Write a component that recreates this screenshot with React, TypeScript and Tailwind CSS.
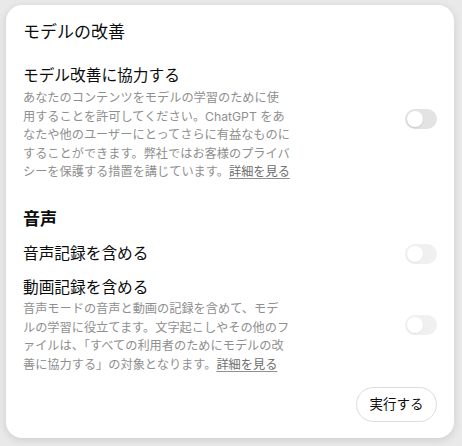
import React from 'react';

const FONT = { fontFamily: 'Inter, "Noto Sans CJK JP", sans-serif' };

interface ToggleProps {
  disabled?: boolean;
}

const Toggle = ({ disabled }: ToggleProps) => {
  return (
    <div
      className={`relative h-[20px] w-[32px] shrink-0 rounded-full bg-[#e3e3e3] ${
        disabled ? 'opacity-50' : ''
      }`}
    >
      <div className="absolute left-[2px] top-[2px] h-[16px] w-[16px] rounded-full bg-white shadow-[0_1px_2px_rgba(0,0,0,0.12)]" />
    </div>
  );
};

const Desc = ({ lines }: { lines: React.ReactNode[] }) => {
  return (
    <p className="text-[12.2px] leading-[18.6px] text-[#8f8f8f]">
      {lines.map((line, i) => (
        <span key={i} className="block whitespace-nowrap">
          {line}
        </span>
      ))}
    </p>
  );
};

const More = () => (
  <span className="text-[#6e6e6e] underline underline-offset-2 decoration-[#8f8f8f]">
    詳細を見る
  </span>
);

export default function App() {
  return (
    <div className="min-h-[446px] w-[462px] bg-[#e9e9e9] pt-[5px] pl-[6px]" style={FONT}>
      {/* Card */}
      <div className="flex h-[433px] w-[448px] flex-col rounded-[16px] bg-white px-[17px] pt-[15px] pb-[16px] text-[#0d0d0d] shadow-[0_2px_8px_rgba(0,0,0,0.12)]">
        <h2 className="text-[17px] leading-[24px]">モデルの改善</h2>

        {/* Model improvement row */}
        <div className="mt-[20px] flex items-center justify-between">
          <div>
            <h3 className="text-[15.7px] leading-[24px]">モデル改善に協力する</h3>
            <div className="mt-[1px]">
              <Desc
                lines={[
                  'あなたのコンテンツをモデルの学習のために使',
                  '用することを許可してください。ChatGPT をあ',
                  'なたや他のユーザーにとってさらに有益なものに',
                  'することができます。弊社ではお客様のプライバ',
                  <>
                    シーを保護する措置を講じています。<More />
                  </>,
                ]}
              />
            </div>
          </div>
          <div className="-mt-[8px]">
            <Toggle />
          </div>
        </div>

        {/* Voice section */}
        <h2 className="mt-[25px] text-[17px] font-semibold leading-[24px]">音声</h2>

        <div className="mt-[11px] flex items-center justify-between">
          <h3 className="text-[15.7px] leading-[24px]">音声記録を含める</h3>
          <Toggle disabled />
        </div>

        <div className="mt-[10px] flex items-center justify-between">
          <div>
            <h3 className="text-[15.7px] leading-[24px]">動画記録を含める</h3>
            <Desc
              lines={[
                '音声モードの音声と動画の記録を含めて、モデ',
                'ルの学習に役立てます。文字起こしやその他のフ',
                'ァイルは、「すべての利用者のためにモデルの改',
                <>
                  善に協力する」の対象となります。<More />
                </>,
              ]}
            />
          </div>
          <Toggle disabled />
        </div>

        <div className="mt-auto flex justify-end">
          <button
            type="button"
            className="h-[35px] w-[81px] rounded-full border border-[#dcdcdc] bg-white text-[13.5px] text-[#0d0d0d]"
          >
            実行する
          </button>
        </div>
      </div>
    </div>
  );
}
